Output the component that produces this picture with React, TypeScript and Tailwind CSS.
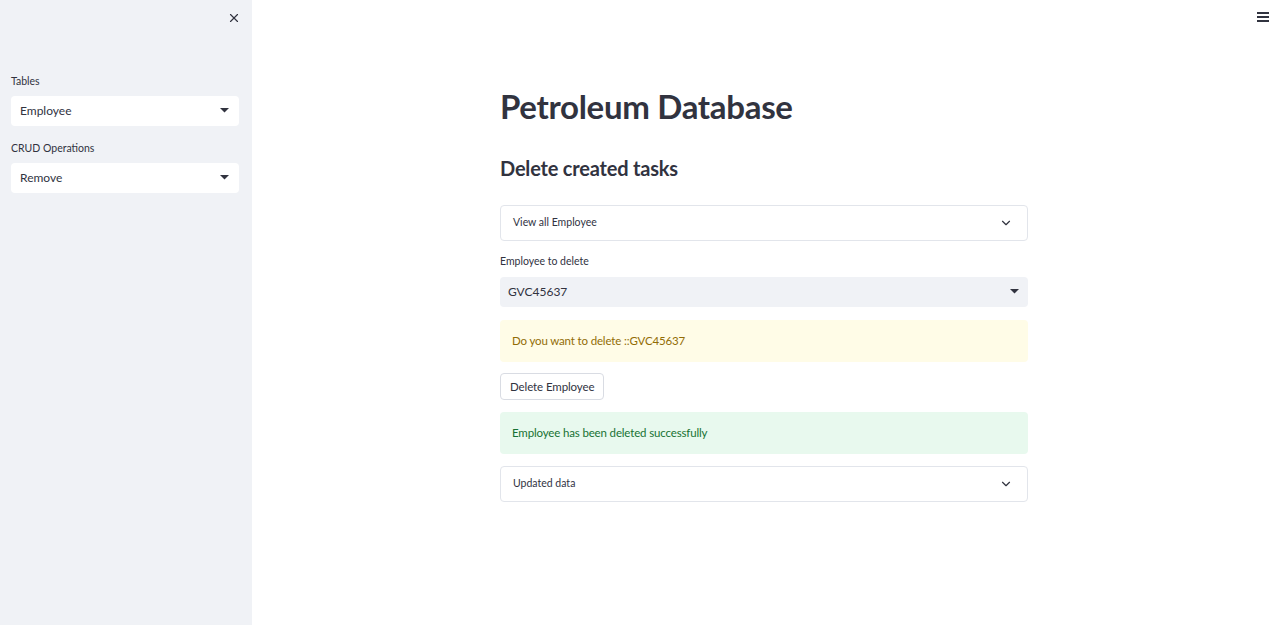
import { ChevronDown, X } from "lucide-react";

const font = { fontFamily: "Lato, 'Noto Sans', sans-serif" };

function Caret() {
  return (
    <svg width="9" height="5" viewBox="0 0 9 5" className="shrink-0">
      <path d="M0 0h9L4.5 4.5z" fill="#31333f" />
    </svg>
  );
}

function SelectBox({ value, className }: { value: string; className: string }) {
  return (
    <div className={`flex h-[30px] items-center justify-between rounded-[4px] text-[12px] text-[#31333f] ${className}`}>
      <span>{value}</span>
      <Caret />
    </div>
  );
}

function Expander({ label }: { label: string }) {
  return (
    <div className="flex h-[36px] items-center justify-between rounded-[4px] border border-[#e2e5eb] pl-[12px] pr-[14px] text-[10.5px] text-[#31333f]">
      <span>{label}</span>
      <ChevronDown className="h-[14px] w-[14px]" strokeWidth={2} color="#31333f" />
    </div>
  );
}

export default function App() {
  return (
    <div className="flex h-[625px] w-full bg-white text-[#31333f]" style={font}>
      <aside className="flex w-[252px] shrink-0 flex-col bg-[#f0f2f6] pl-[11px] pr-[13px] pt-[11px]">
        <div className="flex justify-end">
          <X className="mr-[-2px] h-[14px] w-[14px]" strokeWidth={2} color="#31333f" />
        </div>
        <div className="mt-[49px] text-[10.5px]">Tables</div>
        <SelectBox value="Employee" className="mt-[6px] bg-white pl-[9px] pr-[10px]" />
        <div className="mt-[15px] text-[10.5px]">CRUD Operations</div>
        <SelectBox value="Remove" className="mt-[6px] bg-white pl-[9px] pr-[10px]" />
      </aside>
      <main className="relative flex flex-1 justify-center">
        <button className="absolute right-[11px] top-[12px] flex flex-col gap-[2px]">
          <span className="h-[2px] w-[12px] bg-[#31333f]" />
          <span className="h-[2px] w-[12px] bg-[#31333f]" />
          <span className="h-[2px] w-[12px] bg-[#31333f]" />
        </button>
        <div className="ml-[-4px] flex w-[528px] flex-col pt-[84px]">
          <h1 className="text-[33px] font-bold leading-[44px] tracking-[-0.3px]">Petroleum Database</h1>
          <h3 className="mt-[26px] text-[20px] font-bold leading-[28px] tracking-[-0.2px]">Delete created tasks</h3>
          <div className="mt-[23px]">
            <Expander label="View all Employee" />
          </div>
          <div className="mt-[13px] text-[10.5px]">Employee to delete</div>
          <SelectBox value="GVC45637" className="mt-[7px] bg-[#f0f2f6] pl-[8px] pr-[9px]" />
          <div className="mt-[13px] flex h-[42px] items-center rounded-[4px] bg-[#fffce7] px-[12px] text-[11.5px] tracking-[-0.15px] text-[#926c05]">
            Do you want to delete ::GVC45637
          </div>
          <div className="mt-[11px]">
            <button className="h-[27px] rounded-[4px] border border-[#d9dce3] bg-white px-[9px] text-[11.5px] tracking-[-0.1px] text-[#31333f]">
              Delete Employee
            </button>
          </div>
          <div className="mt-[12px] flex h-[42px] items-center rounded-[4px] bg-[#e8f9ee] px-[12px] text-[11.5px] tracking-[-0.15px] text-[#177233]">
            Employee has been deleted successfully
          </div>
          <div className="mt-[12px]">
            <Expander label="Updated data" />
          </div>
        </div>
      </main>
    </div>
  );
}
